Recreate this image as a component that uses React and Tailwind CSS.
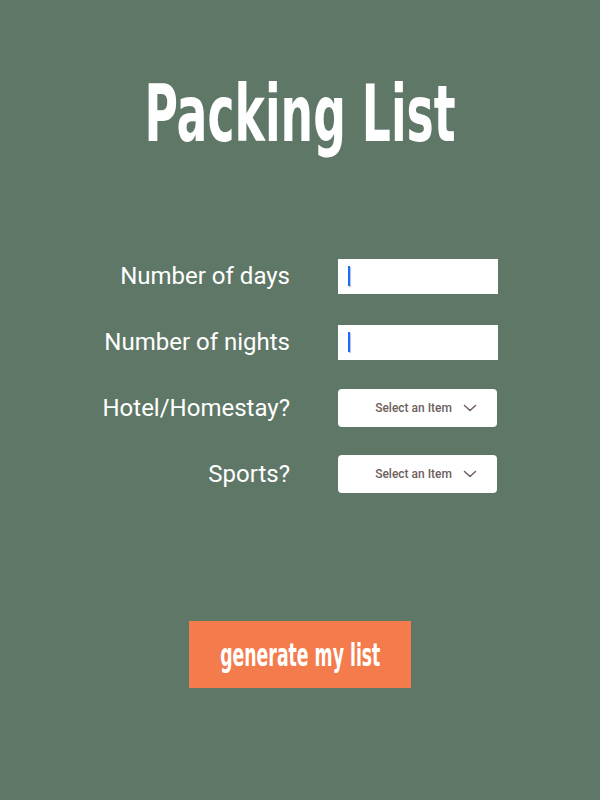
export default function App() {
  const fields = [
    { label: "Number of days", type: "text" },
    { label: "Number of nights", type: "text" },
    { label: "Hotel/Homestay?", type: "select" },
    { label: "Sports?", type: "select" },
  ];

  return (
    <div className="w-[600px] h-[800px] bg-[#5f7767] flex flex-col items-center font-['Roboto',sans-serif]">
      <h1 className="mt-[75px] h-[80px] flex items-center whitespace-nowrap text-white font-bold text-[66px] leading-none font-['DejaVu_Sans_Condensed',sans-serif] scale-y-[1.2] scale-x-[0.77]">
        Packing List
      </h1>

      <div className="mt-[102px] w-full flex flex-col gap-[28px]">
        {fields.map((f) => (
          <div key={f.label} className="flex items-center h-[38px]">
            <div className="w-[290px] text-right text-white text-[24px] leading-none">
              {f.label}
            </div>
            <div className="ml-[48px]">
              {f.type === "text" ? (
                <div className="w-[160px] h-[35px] bg-white flex items-center pl-[10px]">
                  <span className="w-[2px] h-[20px] bg-[#1a6cff] shadow-[1px_1px_1px_rgba(0,0,0,0.25)]" />
                </div>
              ) : (
                <div className="w-[159px] h-[38px] -mt-[1px] bg-white rounded-[4px] flex items-center justify-end pr-[20px] gap-[11px]">
                  <span className="text-[12px] font-medium text-[#6e5e5c]">Select an Item</span>
                  <svg width="14" height="8" viewBox="0 0 14 8" fill="none">
                    <path d="M1.5 1.5 L7 6.5 L12.5 1.5" stroke="#6e5e5c" strokeWidth="1.5" strokeLinecap="round" strokeLinejoin="round" />
                  </svg>
                </div>
              )}
            </div>
          </div>
        ))}
      </div>

      <button className="mt-[128px] w-[222px] h-[67px] bg-[#f47b4b] text-white flex items-center justify-center">
        <span className="whitespace-nowrap text-[26px] font-bold leading-none font-['DejaVu_Sans_Condensed',sans-serif] scale-y-[1.2] scale-x-[0.74]">
          generate my list
        </span>
      </button>
    </div>
  );
}
